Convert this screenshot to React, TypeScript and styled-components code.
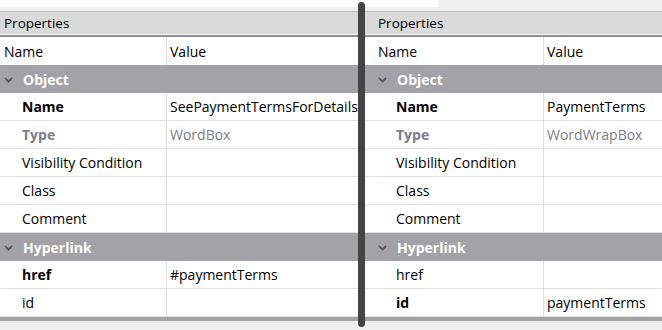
import { FunctionComponent } from 'react';
import styled, { createGlobalStyle } from 'styled-components';

interface IProp {
  name: string;
  value?: string;
  bold?: boolean;
  muted?: boolean;
}

interface IGroup {
  title: string;
  props: IProp[];
}

interface IPanel {
  offset: number;
  nameWidth: number;
  groups: IGroup[];
}

const panels: IPanel[] = [
  {
    offset: 0,
    nameWidth: 166,
    groups: [
      {
        title: 'Object',
        props: [
          { name: 'Name', value: 'SeePaymentTermsForDetails', bold: true },
          { name: 'Type', value: 'WordBox', bold: true, muted: true },
          { name: 'Visibility Condition' },
          { name: 'Class' },
          { name: 'Comment' },
        ],
      },
      {
        title: 'Hyperlink',
        props: [
          { name: 'href', value: '#paymentTerms', bold: true },
          { name: 'id' },
        ],
      },
    ],
  },
  {
    offset: 12,
    nameWidth: 169,
    groups: [
      {
        title: 'Object',
        props: [
          { name: 'Name', value: 'PaymentTerms', bold: true },
          { name: 'Type', value: 'WordWrapBox', bold: true, muted: true },
          { name: 'Visibility Condition' },
          { name: 'Class' },
          { name: 'Comment' },
        ],
      },
      {
        title: 'Hyperlink',
        props: [
          { name: 'href' },
          { name: 'id', value: 'paymentTerms', bold: true },
        ],
      },
    ],
  },
];

const Chevron = () => (
  <svg width="9" height="6" viewBox="0 0 9 6">
    <path d="M1 1 L4.5 4.5 L8 1" fill="none" stroke="#4b4b4e" strokeWidth="1.6" />
  </svg>
);

const PropertyPanel: FunctionComponent<{ panel: IPanel }> = ({ panel }) => (
  <PanelContainer $offset={panel.offset} $cols={`${panel.nameWidth}px 1fr`}>
    <div className="panel-title">Properties</div>
    <div className="panel-row panel-head">
      <span>Name</span>
      <span>Value</span>
    </div>
    {panel.groups.map((group) => (
      <div key={group.title}>
        <div className="panel-group">
          <Chevron />
          <b>{group.title}</b>
        </div>
        {group.props.map((prop) => (
          <div
            key={prop.name}
            className={`panel-row panel-prop${prop.bold ? ' is-bold' : ''}${
              prop.muted ? ' is-muted' : ''
            }`}
          >
            <span>{prop.name}</span>
            <span>{prop.value}</span>
          </div>
        ))}
      </div>
    ))}
    <div className="panel-bottom" />
  </PanelContainer>
);

const App = () => {
  return (
    <AppContainer>
      <GlobalStyle />
      {panels.map((panel, i) => (
        <PropertyPanel key={i} panel={panel} />
      ))}
      <Splitter />
    </AppContainer>
  );
};

export default App;

const GlobalStyle = createGlobalStyle`
  html, body {
    margin: 0;
    padding: 0;
    background: #f3f3f3;
  }
  body {
    font-family: 'Open Sans', 'Noto Sans', sans-serif;
    font-size: 14px;
    color: #000;
  }
`;

const AppContainer = styled.div`
  position: relative;
  display: grid;
  grid-template-columns: 362px 300px;
  width: 662px;
  height: 330px;
  overflow: hidden;
  background: linear-gradient(#fff, #fff) no-repeat 0 0 / 438px 7px, #efefef;
  padding-top: 11px;
  box-sizing: border-box;
`;

const PanelContainer = styled.div<{ $offset: number; $cols: string }>`
  .panel-title {
    height: 22px;
    display: flex;
    align-items: center;
    padding-left: ${(p) => p.$offset + 4}px;
    background: #dadada;
    border-top: 1px solid #c2c2c2;
    border-bottom: 1px solid #f2f2f2;
    box-shadow: 0 2px 0 #8d9099;
    margin-bottom: 2px;
    font-size: 13.5px;
  }
  .panel-row {
    display: grid;
    grid-template-columns: ${(p) => p.$cols};
    height: 27px;
    background: #fff;
    border-bottom: 1px solid #e0e0e0;
    padding-left: ${(p) => p.$offset}px;
    span {
      display: flex;
      align-items: center;
      white-space: nowrap;
      overflow: hidden;
    }
    span + span {
      border-left: 1px solid #e0e0e0;
      padding-left: 3px;
    }
  }
  .panel-head {
    border-bottom: none;
    height: 28px;
    span:first-child {
      padding-left: 4px;
    }
  }
  .panel-prop {
    span:first-child {
      padding-left: 22px;
    }
    &.is-bold span:first-child {
      font-weight: 700;
    }
    &.is-muted span {
      color: #7c7c84;
    }
  }
  .panel-group {
    display: flex;
    align-items: center;
    height: 28px;
    background: #a2a2a7;
    padding-left: ${(p) => p.$offset + 4}px;
    svg {
      margin-right: 10px;
      margin-top: 1px;
    }
    b {
      color: #fff;
      font-weight: 700;
    }
  }
  .panel-bottom {
    height: 4px;
    background: #a3a3a3;
  }
`;

const Splitter = styled.div`
  position: absolute;
  left: 358px;
  top: 2px;
  width: 7px;
  height: 325px;
  border-radius: 4px;
  background: #444;
`;
